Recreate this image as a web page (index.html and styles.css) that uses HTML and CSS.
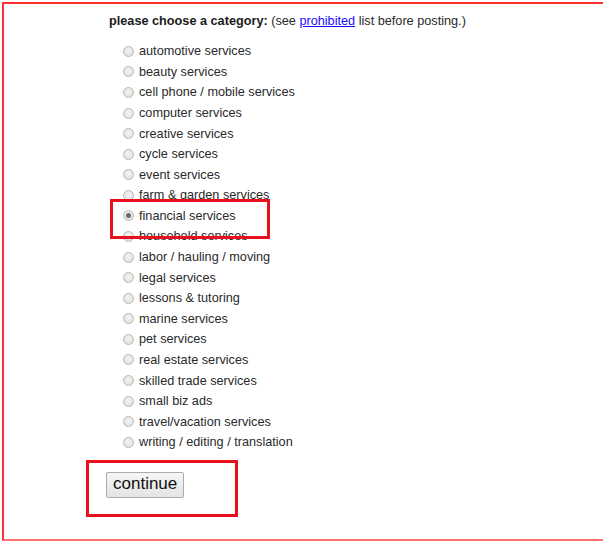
FILE: index.html
```html
<!DOCTYPE html>
<html>
<head>
<meta charset="utf-8">
<link rel="stylesheet" href="styles.css">
</head>
<body>
<div class="frame">
  <div class="content">
    <p class="heading"><b>please choose a category:</b> (see <a href="#">prohibited</a> list before posting.)</p>
    <ul class="cats">
      <li><span class="radio"></span>automotive services</li>
      <li><span class="radio"></span>beauty services</li>
      <li><span class="radio"></span>cell phone / mobile services</li>
      <li><span class="radio"></span>computer services</li>
      <li><span class="radio"></span>creative services</li>
      <li><span class="radio"></span>cycle services</li>
      <li><span class="radio"></span>event services</li>
      <li><span class="radio"></span>farm &amp; garden services</li>
      <li><span class="radio checked"></span>financial services</li>
      <li><span class="radio"></span>household services</li>
      <li><span class="radio"></span>labor / hauling / moving</li>
      <li><span class="radio"></span>legal services</li>
      <li><span class="radio"></span>lessons &amp; tutoring</li>
      <li><span class="radio"></span>marine services</li>
      <li><span class="radio"></span>pet services</li>
      <li><span class="radio"></span>real estate services</li>
      <li><span class="radio"></span>skilled trade services</li>
      <li><span class="radio"></span>small biz ads</li>
      <li><span class="radio"></span>travel/vacation services</li>
      <li><span class="radio"></span>writing / editing / translation</li>
    </ul>
    <div class="actions"><button class="continue">continue</button></div>
  </div>
  <div class="mark mark-financial"></div>
  <div class="mark mark-continue"></div>
</div>
</body>
</html>
```

FILE: styles.css
```css
html, body {
  margin: 0;
  padding: 0;
  background: #ffffff;
}
body {
  font-family: "Liberation Sans", Arial, sans-serif;
  font-size: 12.7px;
  color: #2a2a2a;
}
.frame {
  position: relative;
  margin: 2px 0 0 2px;
  width: 601px;
  height: 539px;
  border-top: 2px solid #ff3030;
  border-left: 2px solid #ff3030;
  border-bottom: 2px solid #ff7070;
  box-sizing: border-box;
}
.content {
  padding: 7px 0 0 105px;
}
.heading {
  margin: 0;
  line-height: 20px;
}
.heading b {
  color: #1a1a1a;
}
.heading a {
  color: #1a0dff;
  text-decoration: underline;
}
.cats {
  list-style: none;
  margin: 10px 0 0 0;
  padding: 0 0 0 14px;
}
.cats li {
  display: flex;
  align-items: center;
  height: 20.58px;
  white-space: nowrap;
}
.radio {
  display: inline-block;
  width: 9px;
  height: 9px;
  border: 1px solid #b8b8b8;
  border-radius: 50%;
  background: radial-gradient(circle at 50% 40%, #f4f4f4 0%, #dcdcdc 100%);
  margin-right: 5px;
  position: relative;
  flex: none;
}
.radio.checked::after {
  content: "";
  position: absolute;
  left: 2px;
  top: 2px;
  width: 5px;
  height: 5px;
  border-radius: 50%;
  background: #6a6a6a;
}
.actions {
  padding-top: 19px;
  margin-left: -3px;
}
.continue {
  font-family: "Liberation Sans", Arial, sans-serif;
  font-size: 17px;
  color: #111111;
  padding: 1px 6px 2px;
  height: 26px;
  background: linear-gradient(#f6f6f6, #e4e4e4);
  border: 1px solid #acacac;
  border-radius: 2px;
}
.mark {
  position: absolute;
  border: 3px solid #e8101e;
}
.mark-financial {
  left: 106px;
  top: 195px;
  width: 154px;
  height: 34px;
}
.mark-continue {
  left: 82px;
  top: 456px;
  width: 146px;
  height: 51px;
}
```
